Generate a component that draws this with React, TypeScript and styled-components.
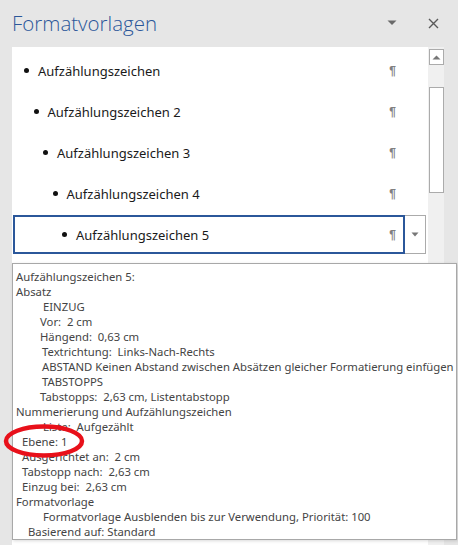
import { createGlobalStyle } from "styled-components";
import styled from "styled-components";

const GlobalStyle = createGlobalStyle`
  html, body {
    margin: 0;
    padding: 0;
    background: #e6e6e6;
    overflow: hidden;
  }
`;

const styles = [
  { name: "Aufzählungszeichen", level: 1 },
  { name: "Aufzählungszeichen 2", level: 2 },
  { name: "Aufzählungszeichen 3", level: 3 },
  { name: "Aufzählungszeichen 4", level: 4 },
  { name: "Aufzählungszeichen 5", level: 5, selected: true }
];

const details: { text: string; indent: number }[] = [
  { text: "Aufzählungszeichen 5:", indent: 4 },
  { text: "Absatz", indent: 4 },
  { text: "EINZUG", indent: 31 },
  { text: "Vor:  2 cm", indent: 28 },
  { text: "Hängend:  0,63 cm", indent: 28 },
  { text: "Textrichtung:  Links-Nach-Rechts", indent: 30 },
  { text: "ABSTAND Keinen Abstand zwischen Absätzen gleicher Formatierung einfügen", indent: 30 },
  { text: "TABSTOPPS", indent: 30 },
  { text: "Tabstopps:  2,63 cm, Listentabstopp", indent: 28 },
  { text: "Nummerierung und Aufzählungszeichen", indent: 4 },
  { text: "Liste:  Aufgezählt", indent: 31 },
  { text: "Ebene: 1", indent: 10 },
  { text: "Ausgerichtet an:  2 cm", indent: 10 },
  { text: "Tabstopp nach:  2,63 cm", indent: 10 },
  { text: "Einzug bei:  2,63 cm", indent: 10 },
  { text: "Formatvorlage", indent: 4 },
  { text: "Formatvorlage Ausblenden bis zur Verwendung, Priorität: 100", indent: 31 },
  { text: "Basierend auf: Standard", indent: 16 }
];

const App = () => {
  return (
    <>
      <GlobalStyle />
      <Pane>
        <Header>
          <Title>Formatvorlagen</Title>
          <HeaderButtons>
            <svg width="12" height="8" viewBox="0 0 12 8">
              <path d="M1.5 1.5 L10.5 1.5 L6 6 Z" fill="#6a6a6a" />
            </svg>
            <svg width="11" height="11" viewBox="0 0 11 11">
              <path d="M1 1 L10 10 M10 1 L1 10" stroke="#5a5a5a" strokeWidth="1.4" />
            </svg>
          </HeaderButtons>
        </Header>
        <Body>
          <List>
            {styles.map((s) => (
              <Row key={s.name}>
                <Item $level={s.level} $selected={!!s.selected}>
                  <Bullet />
                  <ItemName>{s.name}</ItemName>
                  <Pilcrow>¶</Pilcrow>
                </Item>
                {s.selected && (
                  <DropButton>
                    <svg width="8" height="5" viewBox="0 0 8 5">
                      <path d="M0.5 0.5 L7.5 0.5 L4 4.5 Z" fill="#777" />
                    </svg>
                  </DropButton>
                )}
              </Row>
            ))}
          </List>
          <Scrollbar>
            <ScrollArrow>
              <svg width="9" height="5" viewBox="0 0 9 5">
                <path d="M0.5 4.5 L8.5 4.5 L4.5 0.5 Z" fill="#777" />
              </svg>
            </ScrollArrow>
            <Thumb />
          </Scrollbar>
        </Body>
        <Tooltip>
          {details.map((d, i) => (
            <DetailLine key={i} $indent={d.indent}>
              {d.text}
            </DetailLine>
          ))}
        </Tooltip>
        <Marker width="82" height="36" viewBox="0 0 82 36">
          <ellipse cx="41" cy="18" rx="38" ry="14.5" fill="none" stroke="#e8101a" strokeWidth="4.5" />
        </Marker>
      </Pane>
    </>
  );
};

export default App;

const Pane = styled.div`
  position: relative;
  width: 458px;
  height: 545px;
  display: flex;
  flex-direction: column;
  font-family: "Noto Sans", "Open Sans", sans-serif;
  overflow: hidden;
`;

const Header = styled.div`
  height: 47px;
  flex-shrink: 0;
  display: flex;
  align-items: center;
  justify-content: space-between;
  padding: 0 19px 0 12px;
  box-sizing: border-box;
`;

const Title = styled.div`
  font-family: "Open Sans", "Noto Sans", sans-serif;
  font-weight: 300;
  font-size: 20.5px;
  color: #2b579a;
  margin-top: -1px;
`;

const HeaderButtons = styled.div`
  display: flex;
  align-items: center;
  gap: 30px;
  margin-top: -1px;
`;

const Body = styled.div`
  flex: 1;
  display: flex;
  margin: 0 14px 0 12px;
  background: #ffffff;
`;

const List = styled.div`
  flex: 1;
  padding-top: 3px;
`;

const Row = styled.div`
  height: 41px;
  display: flex;
  align-items: center;
`;

const Item = styled.div<{ $level: number; $selected: boolean }>`
  box-sizing: border-box;
  width: 392px;
  height: 39px;
  margin-left: 1px;
  display: flex;
  align-items: center;
  padding-left: ${(p) => 9 + (p.$level - 1) * 9.5}px;
  padding-right: 7px;
  border: 2px solid ${(p) => (p.$selected ? "#2b579a" : "transparent")};
`;

const Bullet = styled.span`
  width: 5px;
  height: 5px;
  border-radius: 50%;
  background: #111;
  flex-shrink: 0;
  margin-right: 9px;
`;

const ItemName = styled.span`
  flex: 1;
  font-size: 13px;
  color: #1a1a1a;
`;

const Pilcrow = styled.span`
  font-family: "Liberation Sans", sans-serif;
  font-size: 12px;
  color: #808080;
  font-weight: bold;
`;

const DropButton = styled.div`
  box-sizing: border-box;
  width: 21px;
  height: 39px;
  border: 1px solid #ababab;
  border-left: none;
  display: flex;
  align-items: center;
  justify-content: center;
`;

const Scrollbar = styled.div`
  width: 16px;
  background: #f0f0f0;
  display: flex;
  flex-direction: column;
  align-items: center;
  padding-top: 2px;
`;

const ScrollArrow = styled.div`
  box-sizing: border-box;
  width: 15px;
  height: 16px;
  border: 1px solid #ababab;
  background: #ffffff;
  display: flex;
  align-items: center;
  justify-content: center;
`;

const Thumb = styled.div`
  box-sizing: border-box;
  width: 15px;
  height: 106px;
  margin-top: 22px;
  border: 1px solid #ababab;
  background: #ffffff;
`;

const Tooltip = styled.div`
  position: absolute;
  left: 12px;
  top: 263px;
  width: 445px;
  height: 277px;
  box-sizing: border-box;
  background: #ffffff;
  border: 1px solid #a8a8a8;
  box-shadow: 1px 1px 3px rgba(0, 0, 0, 0.15);
  padding-top: 5px;
`;

const DetailLine = styled.div<{ $indent: number }>`
  font-size: 11.3px;
  line-height: 15px;
  color: #444444;
  white-space: pre;
  padding-left: ${(p) => p.$indent - 1}px;
`;

const Marker = styled.svg`
  position: absolute;
  left: 3px;
  top: 423px;
`;
